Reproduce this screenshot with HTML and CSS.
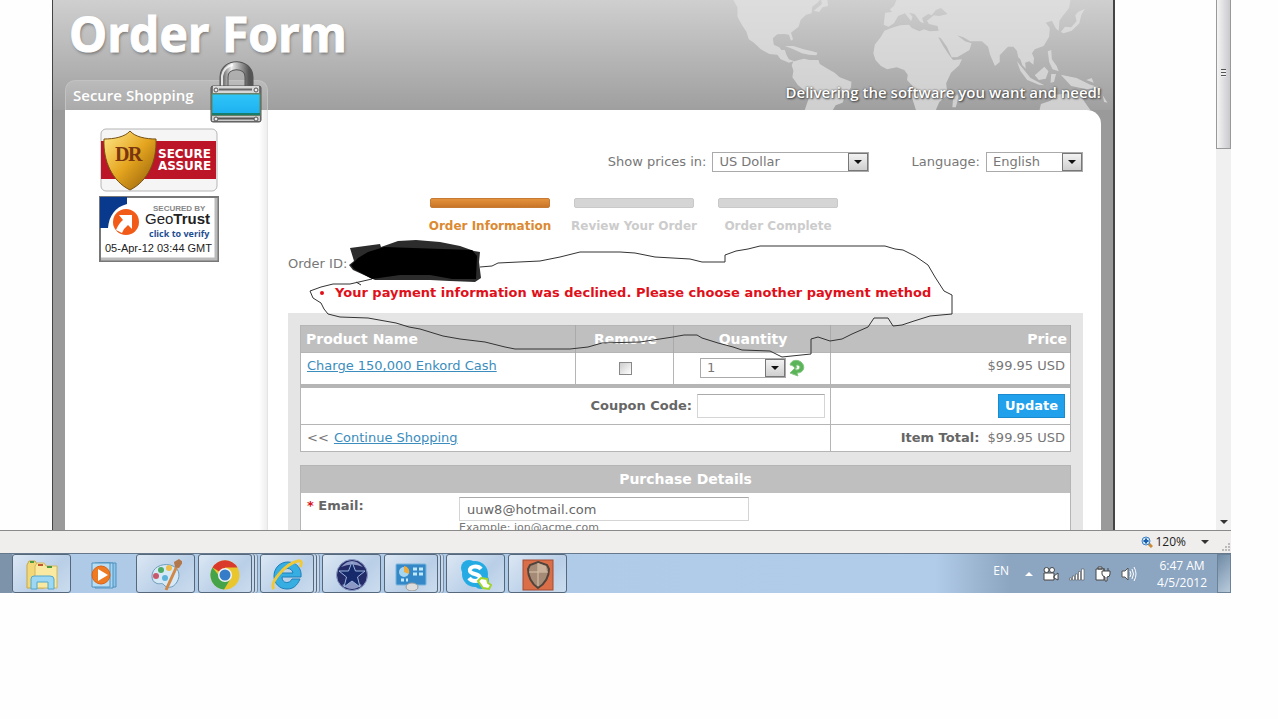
FILE: index.html
```html
<!DOCTYPE html>
<html lang="en">
<head>
    <meta charset="UTF-8">
    <meta name="viewport" content="width=device-width, initial-scale=1.0">
    <title>Order Form</title>
    <link rel="stylesheet" href="styles.css">
</head>
<body>

    <div class="browser">
        <div class="view">
            <div class="page">
                <header class="header">
                    <svg class="map" viewBox="0 0 1206 330" preserveAspectRatio="none" aria-hidden="true">
                        <path d="M100 0L112 22L112 50L125 75L138 95L145 118L160 128L180 148L205 162L228 164L238 178L262 188L275 184L270 196L275 212L272 232L288 255L312 275L318 300L308 330L390 330L398 316L418 308L428 285L443 262L444 245L410 232L395 218L372 205L352 192L348 180L322 180L306 176L290 180L278 184L262 178L255 165L250 150L240 150L234 142L218 134L215 115L228 103L248 102L262 104L268 122L274 118L268 98L290 80L296 60L312 44L328 40L330 20L345 8L352 0Z"/>
                        <path d="M250 138L275 138L305 148L330 154L345 158L342 166L320 164L300 160L275 148ZM334 32L358 12L356 0L374 0L376 18L360 22L350 36Z"/>
                        <path d="M575 0L568 18L556 28L562 36L542 38L538 74L552 80L568 70L580 48L600 40L618 64L622 50L612 38L628 42L645 66L655 70L650 54L668 42L678 46L690 30L705 24L724 42L700 48L684 46L664 62L670 72L695 78L698 92L672 94L655 88L642 94L620 84L612 74L586 76L560 84L540 92L530 110L512 134L508 160L514 180L530 198L548 208L576 202L598 210L608 224L606 240L622 258L618 285L632 330L690 330L700 306L724 286L720 250L734 218L758 196L766 178L740 180L728 164L710 136L697 112L704 114L722 140L736 172L752 172L788 150L794 130L775 124L752 106L770 112L790 124L824 124L842 140L848 164L862 198L876 186L876 166L900 140L916 140L926 152L930 172L936 178L942 196L952 206L950 188L962 184L974 194L976 174L970 160L978 148L1004 138L1020 110L1022 84L1010 68L1028 62L1040 86L1048 92L1050 62L1058 50L1078 24L1082 0Z"/>
                        <path d="M1054 96L1066 80L1084 82L1100 64L1096 46L1104 36L1124 26L1114 44L1108 70L1086 92L1062 100ZM1016 154L1026 150L1028 178L1042 198L1048 214L1030 208L1020 186ZM926 184L944 206L966 234L1006 256L990 254L956 240L936 212ZM978 226L1006 200L1018 214L1010 236L990 240ZM1026 222L1040 222L1034 246L1024 248ZM1054 224L1100 234L1140 254L1166 262L1130 268L1084 258ZM992 330L996 312L1024 302L1040 284L1074 280L1092 290L1108 280L1122 304L1140 330ZM738 322L740 298L752 282L756 292L748 322ZM1144 234L1128 240L1150 248ZM1176 286L1190 308L1180 306Z"/>
                    </svg>
                    <h1 class="title">Order Form</h1>
                    <div class="header-foot">
                        <h2 class="secure-tab">Secure Shopping</h2>
                        <p class="tagline">Delivering the software you want and need!</p>
                    </div>
                    <svg class="padlock" viewBox="0 0 54 66" aria-hidden="true">
                        <defs>
                            <linearGradient id="steel" x1="0" y1="0" x2="1" y2="0">
                                <stop offset="0" stop-color="#777"/>
                                <stop offset=".3" stop-color="#eee"/>
                                <stop offset=".6" stop-color="#aaa"/>
                                <stop offset="1" stop-color="#555"/>
                            </linearGradient>
                            <linearGradient id="lockblue" x1="0" y1="0" x2="0" y2="1">
                                <stop offset="0" stop-color="#2fc5f7"/>
                                <stop offset="1" stop-color="#1cb0f0"/>
                            </linearGradient>
                        </defs>
                        <path d="M15 30V17C15 2 40 2 40 17V30" fill="none" stroke="#555" stroke-width="9"/>
                        <path d="M15 30V17C15 2 40 2 40 17V30" fill="none" stroke="url(#steel)" stroke-width="7"/>
                        <path d="M13 26V16C14 10 18 6 24 5" fill="none" stroke="#fff" stroke-width="2" opacity=".8"/>
                        <rect x="2" y="26" width="50" height="36" rx="2" fill="#777" stroke="#555"/>
                        <rect x="4" y="26" width="46" height="7" fill="#d8d8d8"/>
                        <path d="M10 29.5H43" stroke="#666" stroke-width="2"/>
                        <rect x="3" y="34" width="48" height="21" fill="url(#lockblue)" stroke="#5c8a5c"/>
                        <path d="M3 54H51" stroke="#177d6c" stroke-width="2"/>
                        <rect x="3" y="56" width="48" height="5" fill="#ccc"/>
                        <path d="M8 58.5H46" stroke="#555" stroke-width="2"/>
                        <circle cx="7" cy="30" r="2" fill="#eee" stroke="#555"/>
                        <circle cx="47" cy="30" r="2" fill="#eee" stroke="#555"/>
                        <circle cx="7" cy="59" r="2" fill="#eee" stroke="#555"/>
                        <circle cx="47" cy="59" r="2" fill="#eee" stroke="#555"/>
                    </svg>
                </header>

                <div class="columns">
                    <aside class="sidebar">
                        <a class="badge-dr" href="#" aria-label="DR Secure Assure">
                            <svg viewBox="0 0 118 64">
                                <defs>
                                    <linearGradient id="gold" x1="0" y1="0" x2="1" y2="1">
                                        <stop offset="0" stop-color="#ffe98a"/>
                                        <stop offset=".5" stop-color="#e5a51f"/>
                                        <stop offset="1" stop-color="#8d5a08"/>
                                    </linearGradient>
                                </defs>
                                <rect x="1" y="1" width="116" height="62" rx="5" fill="#f5f5f5" stroke="#b5b5b5"/>
                                <rect x="1" y="13" width="115" height="38" fill="#bd1528"/>
                                <path d="M30 3C25 9 14 11 4 11C3 33 12 53 30 62C48 53 57 33 56 11C46 11 35 9 30 3Z" fill="url(#gold)" stroke="#755013"/>
                                <text x="15" y="33" class="dr-mark">D</text>
                                <text x="28" y="33" class="dr-mark">R</text>
                                <text x="58" y="30" class="dr-text">SECURE</text>
                                <text x="58" y="42" class="dr-text">ASSURE</text>
                            </svg>
                        </a>
                        <a class="badge-geo" href="#" aria-label="Secured by GeoTrust">
                            <svg viewBox="0 0 120 66">
                                <rect x="1" y="1" width="118" height="64" fill="#fff" stroke="#777" stroke-width="2"/>
                                <path d="M2 63H117V2" fill="none" stroke="#bbb" stroke-width="3"/>
                                <path d="M1 1H28V8C16 11 10 20 9 32H1Z" fill="#09398c"/>
                                <circle cx="27" cy="26" r="13" fill="#f15a17"/>
                                <path d="M20 19H33V33L29 29Q25 32 23 37L17 34Q20 27 24 24Z" fill="#fff"/>
                                <text x="54" y="15" class="geo-small">SECURED BY</text>
                                <text x="46" y="28" class="geo-name">Geo<tspan class="geo-bold">Trust</tspan></text>
                                <text x="50" y="41" class="geo-link">click to verify</text>
                                <text x="6" y="56" class="geo-date">05-Apr-12 03:44 GMT</text>
                            </svg>
                        </a>
                    </aside>

                    <main class="main">
                        <form class="locale">
                            <label for="currency">Show prices in:</label>
                            <span class="select select-currency">
                                <select id="currency"><option>US Dollar</option></select>
                            </span>
                            <label class="label-language" for="language">Language:</label>
                            <span class="select select-language">
                                <select id="language"><option>English</option></select>
                            </span>
                        </form>

                        <ol class="steps">
                            <li class="step active">Order Information</li>
                            <li class="step">Review Your Order</li>
                            <li class="step">Order Complete</li>
                        </ol>

                        <p class="order-id">Order ID:</p>
                        <ul class="errors">
                            <li>Your payment information was declined. Please choose another payment method</li>
                        </ul>

                        <form class="panel">
                            <table class="cart">
                                <colgroup>
                                    <col class="col-name">
                                    <col class="col-remove">
                                    <col class="col-quantity">
                                    <col>
                                </colgroup>
                                <thead>
                                    <tr>
                                        <th class="left">Product Name</th>
                                        <th id="remove-head">Remove</th>
                                        <th id="quantity-head">Quantity</th>
                                        <th class="right">Price</th>
                                    </tr>
                                </thead>
                                <tbody>
                                    <tr class="item">
                                        <td class="name"><a href="#">Charge 150,000 Enkord Cash</a></td>
                                        <td class="center"><input class="remove" type="checkbox" aria-labelledby="remove-head"></td>
                                        <td>
                                            <div class="quantity">
                                                <span class="select select-quantity">
                                                    <select aria-labelledby="quantity-head"><option>1</option></select>
                                                </span>
                                                <button class="refresh" type="button" aria-label="Refresh">
                                                    <svg viewBox="0 0 16 18">
                                                        <path d="M1 6C2 1 8 0 12 3C17 7 15 14 8 14L9 17L1 14L6 9L7 11C12 11 12 6 8 6C7 6 7 8 8 9L6 9C4 7 3 6 1 6Z" fill="#5cb45a" stroke="#83c77f"/>
                                                    </svg>
                                                </button>
                                            </div>
                                        </td>
                                        <td class="right price">$99.95 USD</td>
                                    </tr>
                                    <tr class="coupon">
                                        <td colspan="3">
                                            <div class="coupon-field">
                                                <label for="coupon">Coupon Code:</label>
                                                <input class="text coupon-input" type="text" id="coupon">
                                            </div>
                                        </td>
                                        <td class="right"><button class="update" type="button">Update</button></td>
                                    </tr>
                                    <tr class="total">
                                        <td colspan="3">&lt;&lt; <a href="#">Continue Shopping</a></td>
                                        <td class="right"><b>Item Total:</b>&nbsp; $99.95 USD</td>
                                    </tr>
                                </tbody>
                            </table>

                            <section class="details">
                                <h3>Purchase Details</h3>
                                <div class="field">
                                    <label for="email"><span class="required">*</span> Email:</label>
                                    <div class="field-value">
                                        <input class="text email-input" type="text" id="email" value="uuw8@hotmail.com">
                                        <p class="hint">Example: jon@acme.com</p>
                                    </div>
                                </div>
                            </section>
                        </form>
                    </main>
                </div>
            </div>
        </div>

        <div class="scrollbar" aria-hidden="true">
            <div class="thumb"><i></i></div>
            <div class="arrow-down"></div>
        </div>
    </div>

    <div class="status">
        <svg class="zoom-icon" viewBox="0 0 12 12" aria-hidden="true">
            <path d="M7 7L11 11" stroke="#c98b3c" stroke-width="3"/>
            <circle cx="5" cy="5" r="4" fill="#cfe6fb" stroke="#3f82c4"/>
            <path d="M5 2.5V7.5M2.5 5H7.5" stroke="#1b5fae" stroke-width="2"/>
        </svg>
        <span>120%</span>
        <i class="caret"></i>
        <svg class="resize" viewBox="0 0 8 8" aria-hidden="true">
            <path d="M6 0H8V2H6ZM3 3H5V5H3ZM6 3H8V5H6ZM0 6H2V8H0ZM3 6H5V8H3ZM6 6H8V8H6Z" fill="#bbb"/>
        </svg>
    </div>

    <nav class="taskbar">
        <button class="task" aria-label="Explorer">
            <svg viewBox="0 0 32 32">
                <path d="M1 6L3 2H9L11 5H18V29H1Z" fill="#f3d877" stroke="#c6a64a"/>
                <path d="M9 7L11 4H18L20 7H31V29H9Z" fill="#fae9a1" stroke="#d3b65b"/>
                <path d="M4 3H8M21 8H26" stroke="#4c9a3f" stroke-width="2"/>
                <path d="M12 6H17" stroke="#c2562f" stroke-width="2"/>
                <path d="M5 30V20Q5 17 8 17H24Q28 17 28 20V30H22V23H11V30Z" fill="#9cd8f3" stroke="#52a6cf"/>
            </svg>
        </button>
        <button class="task plain" aria-label="Media Player">
            <svg viewBox="0 0 32 32">
                <path d="M10 4H28V28H10Z" fill="#8ec5e8" stroke="#4f91bf"/>
                <path d="M7 4H25V29H7Z" fill="#a8d4ee" stroke="#4f91bf"/>
                <path d="M4 4H22V28H4Z" fill="#b9def3" stroke="#4f91bf"/>
                <circle cx="13" cy="16" r="9" fill="#ee7a22" stroke="#d9611a"/>
                <path d="M10 10V22L20 16Z" fill="#fff"/>
            </svg>
        </button>
        <button class="task" aria-label="Paint">
            <svg viewBox="0 0 32 32">
                <path d="M2 17C2 9 11 4 20 6C29 8 31 16 27 23C23 30 16 29 14 26C12 23 9 26 6 24C3 23 2 20 2 17Z" fill="#d5e9f6" stroke="#6f9cba"/>
                <circle cx="6" cy="17" r="3" fill="#c9586a"/>
                <circle cx="11" cy="11" r="3" fill="#4cac65"/>
                <circle cx="19" cy="9" r="3" fill="#f0bd49"/>
                <circle cx="15" cy="19" r="3" fill="#5eb3dd"/>
                <path d="M16 31L27 7" stroke="#d18745" stroke-width="3"/>
                <path d="M25 8L24 3L29 0L33 3L29 9Z" fill="#b2774a"/>
            </svg>
        </button>
        <button class="task stacked" aria-label="Chrome">
            <svg viewBox="0 0 32 32">
                <circle cx="16" cy="16" r="14.5" fill="#e9c62d"/>
                <path d="M16 16L3.500 8.500A14.500 14.500 0 0 1 28.500 8.500H16Z" fill="#d93a2b"/>
                <path d="M3.500 8.500A14.500 14.500 0 0 0 15 30.500L22 19L16 16H9.5Z" fill="#45a44a"/>
                <circle cx="16" cy="16" r="7" fill="#f4f4f4"/>
                <circle cx="16" cy="16" r="5.5" fill="#357dc8"/>
            </svg>
        </button>
        <button class="task stacked" aria-label="Internet Explorer">
            <svg viewBox="0 0 32 32">
                <path d="M29 20C26 27 22 30 16 30C8 30 3 24 3 17C3 9 9 3 17 3C26 3 31 10 30 18H11C11 25 19 25 21 20ZM11 14H22C21 8 12 8 11 14Z" fill="#37aee2" stroke="#1c7fb8"/>
                <path d="M3 30C-2 24 14 5 27 2C31 1 31 5 29 8" fill="none" stroke="#f0c93b" stroke-width="3"/>
            </svg>
        </button>
        <button class="task" aria-label="Star">
            <svg viewBox="0 0 32 32">
                <circle cx="16" cy="16" r="15.5" fill="#232c69" stroke="#8f9cc4"/>
                <path d="M5 8Q16 -4 27 8Q16 3 5 8ZM6 26Q16 34 26 26L16 22Z" fill="#8e98c4"/>
                <path d="M16 3L19.500 12H29L21.500 18L24 28L16 22L8 28L10.500 18L3 12H12.500Z" fill="#16296b" stroke="#98b5dd"/>
            </svg>
        </button>
        <button class="task stacked" aria-label="Control Panel">
            <svg viewBox="0 0 32 32">
                <rect x="1" y="5" width="30" height="21" rx="1" fill="#3588c7" stroke="#7bb4dc"/>
                <circle cx="9" cy="13" r="5" fill="#a6d5f0"/>
                <path d="M9 13V7A6 6 0 0 1 14 15Z" fill="#efab3c"/>
                <path d="M18 10H22M24 10H28M18 15H22M24 15H28M6 21H9M11 21H13" stroke="#c2e9fa" stroke-width="3"/>
                <ellipse cx="17" cy="28" rx="6" ry="4" fill="#ddd" stroke="#999"/>
            </svg>
        </button>
        <button class="task" aria-label="Skype">
            <svg viewBox="0 0 32 32">
                <circle cx="9" cy="9" r="8" fill="#25abe4"/>
                <circle cx="21" cy="22" r="8" fill="#25abe4"/>
                <circle cx="15" cy="15" r="13" fill="#25abe4"/>
                <path d="M21 10C18 6 9 7 10 12C11 16 20 14 20 19C19 23 12 23 9 19" fill="none" stroke="#fff" stroke-width="4"/>
                <path d="M18 22L21 19L27 20L28 24L31 26L29 30L23 29Z" fill="#fff" stroke="#a2d42c" stroke-width="2"/>
            </svg>
        </button>
        <button class="task" aria-label="Shield">
            <svg viewBox="0 0 32 32">
                <rect x="1" y="1" width="30" height="30" fill="#d96e48" stroke="#a54b30"/>
                <path d="M16 3L25 6L27 10Q27 22 16 29Q6 22 6 10L8 6Z" fill="#a58b76" stroke="#51443c" stroke-width="2"/>
                <path d="M16 4V27M7 13H26" stroke="#d7c4b0"/>
                <path d="M16 4L24 7L25 13H16Z" fill="#c9b19b"/>
            </svg>
        </button>

        <div class="tray">
            <span class="lang">EN</span>
            <svg class="tray-up" viewBox="0 0 8 5" aria-hidden="true"><path d="M0 5L4 1L8 5Z" fill="#fff"/></svg>
            <svg class="tray-icon" viewBox="0 0 16 16" aria-hidden="true">
                <path d="M1 7H11V14H1ZM11 10L15 7V14L11 12Z" fill="#fff" stroke="#444"/>
                <circle cx="3.500" cy="4" r="2.500" fill="#fff" stroke="#444"/>
                <circle cx="9" cy="4" r="2.500" fill="#fff" stroke="#444"/>
            </svg>
            <svg class="tray-icon" viewBox="0 0 16 16" aria-hidden="true">
                <path d="M0.500 12H2.500V14H0.500ZM3.500 10H5.500V14H3.500ZM6.500 8H8.500V14H6.500ZM9.500 5.500H11.500V14H9.500ZM12.500 3H15V14H12.500Z" fill="#fff" stroke="#555" stroke-width=".6"/>
            </svg>
            <svg class="tray-icon" viewBox="0 0 16 16" aria-hidden="true">
                <path d="M1 3H9V14H1ZM3 1H7V3H3Z" fill="#fff" stroke="#444"/>
                <path d="M7 5H15V8Q15 11 12 11V15H10V11Q7 10 7 8ZM9 2V5M13 2V5" fill="#fff" stroke="#444"/>
            </svg>
            <svg class="tray-icon" viewBox="0 0 16 16" aria-hidden="true">
                <path d="M1 5H4L7 2V14L4 11H1Z" fill="#fff" stroke="#555"/>
                <path d="M9 5Q11 8 9 11M11 3Q14 8 11 13M13 1Q17 8 13 15" fill="none" stroke="#fff"/>
            </svg>
            <div class="clock">
                <span>6:47 AM</span>
                <span>4/5/2012</span>
            </div>
            <button class="show-desktop" aria-label="Show desktop"></button>
        </div>
    </nav>

    <!-- pen marks over the page -->
    <svg class="marks" viewBox="0 0 1278 719" aria-hidden="true">
        <path d="M350 248L380 244L381 247L398 241L416 240L440 242L460 246L474 251L480 252L479 262L481 278L475 282L450 281L430 280H375L353 270L349 265L354 261Z" fill="#2c2c2c"/>
        <path d="M351 265L358 258L368 252L384 247L472 250L477 256L476 279L452 279L430 275L400 275L372 279L354 269Z" fill="#000"/>
        <path d="M480 267L492 266L498 263L540 261L560 257L580 252H620L635 253L655 257L690 259L702 262H725V255L736 251L748 249L760 246H885L895 249L903 250L915 256L928 265L935 277L944 291L952 295V314L930 316L914 321L902 325L893 326L888 318H874L868 327L852 334L842 339L830 341L818 337L811 339V354L782 357L770 351L742 350L733 347L718 343L702 338L697 335H684L673 337L640 342L602 343L588 347L570 349H515L505 347L485 342L460 339L443 336L420 329L409 327L396 323L368 318L340 317L328 314L324 309L321 303L313 298L310 291L321 287L333 284L350 284L372 279M356 282L361 285" fill="none" stroke="#333"/>
    </svg>

</body>
</html>
```

FILE: styles.css
```css
* {
    box-sizing: border-box;
}

body {
    display: flex;
    flex-direction: column;
    height: 100vh;
    margin: 0;
    padding: 0 47px 126px 0;
    background: #fefefe;
    color: #777;
    font-family: Verdana, "DejaVu Sans", sans-serif;
    font-size: 13px;
    line-height: 18px;
    overflow: hidden;
}

h1, h2, h3, p, ul, ol {
    margin: 0;
    padding: 0;
}

button, input, select {
    font: inherit;
    color: inherit;
}

a {
    color: #3b8dbd;
}

.browser {
    display: flex;
    flex: 1;
    min-height: 0;
}

.view {
    flex: 1;
    padding: 0 101px 0 52px;
    overflow: hidden;
}

.page {
    border: solid #444;
    border-width: 0 2px 0 1px;
    background: #9a9a9a;
}

/* header */
.header {
    position: relative;
    display: flex;
    flex-direction: column;
    justify-content: space-between;
    height: 110px;
    padding-left: 12px;
    background: linear-gradient(#cfcfcf, #9f9f9f);
}

.map {
    position: absolute;
    top: 0;
    right: 0;
    width: 414px;
    height: 110px;
    fill: #e4e4e4;
    opacity: .7;
}

.title {
    padding: 0 4px;
    color: #fff;
    font-family: "Open Sans", "Noto Sans", sans-serif;
    font-size: 48px;
    font-weight: bold;
    line-height: 68px;
    text-shadow: 1px 2px 3px #777;
    -webkit-text-stroke: 1px #fff;
}

.header-foot {
    display: flex;
    justify-content: space-between;
    position: relative;
}

.secure-tab {
    width: 203px;
    height: 30px;
    padding-left: 7px;
    border: 1px solid #c2c2c2;
    border-bottom: 0;
    border-radius: 10px 10px 0 0;
    background: linear-gradient(#bbb, #aaa);
    color: #fff;
    font-family: "Open Sans", "Noto Sans", sans-serif;
    font-size: 15px;
    font-weight: 600;
    line-height: 28px;
}

.tagline {
    padding-right: 12px;
    color: #fff;
    font-family: "Open Sans", "Noto Sans", sans-serif;
    font-size: 15px;
    font-weight: 600;
    line-height: 24px;
    text-shadow: 0 0 2px #444, 1px 1px 2px #444;
}

.padlock {
    position: absolute;
    top: 60px;
    left: 156px;
    width: 54px;
    height: 66px;
}

/* columns */
.columns {
    display: flex;
    padding: 0 12px;
}

.sidebar {
    display: flex;
    flex-direction: column;
    align-items: center;
    gap: 4px;
    width: 203px;
    padding: 18px 14px 0 0;
    border-right: 1px solid #e4e4e4;
    background: linear-gradient(to left, #eee, #fff 8px);
}

.sidebar svg {
    display: block;
}

.badge-dr {
    width: 118px;
}

.badge-geo {
    width: 120px;
}

.dr-mark {
    fill: #7a3610;
    font: bold 20px "Liberation Serif", serif;
}

.dr-text {
    fill: #fff;
    font: bold 12px "DejaVu Sans", sans-serif;
}

.geo-small {
    fill: #888;
    font: bold 8px "Liberation Sans", sans-serif;
}

.geo-name {
    fill: #222;
    font: 15px "Liberation Sans", sans-serif;
}

.geo-bold {
    font-weight: bold;
}

.geo-link {
    fill: #1f4f92;
    font: bold 9px "Open Sans", sans-serif;
}

.geo-date {
    fill: #222;
    font: 11px "Liberation Sans", sans-serif;
}

.main {
    flex: 1;
    padding: 42px 18px 0 20px;
    border-radius: 0 14px 0 0;
    background: #fff;
}

.locale {
    display: flex;
    align-items: center;
    justify-content: flex-end;
    gap: 6px;
}

.label-language {
    margin-left: 36px;
}

.select {
    position: relative;
    display: block;
    height: 20px;
}

.select select {
    display: block;
    width: 100%;
    height: 100%;
    padding: 0 6px;
    border: 1px solid #aaa;
    border-radius: 0;
    background: #fff;
    appearance: none;
}

.select::before {
    content: "";
    position: absolute;
    top: 1px;
    right: 1px;
    width: 18px;
    height: 16px;
    border: 1px solid #777;
    background: linear-gradient(#f2f2f2, #cfcfcf);
    pointer-events: none;
}

.select::after {
    content: "";
    position: absolute;
    top: 8px;
    right: 7px;
    border: 4px solid transparent;
    border-top-color: #111;
    border-bottom: 0;
    pointer-events: none;
}

.select-currency {
    width: 157px;
}

.select-language {
    width: 97px;
}

.select-quantity {
    width: 86px;
}

.steps {
    display: flex;
    gap: 4px;
    margin: 26px 0 0 132px;
    list-style: none;
}

.step {
    width: 140px;
    color: #ccc;
    font-size: 12px;
    font-weight: bold;
    text-align: center;
    white-space: nowrap;
}

.step::before {
    content: "";
    display: block;
    height: 8px;
    margin: 0 10px 9px;
    border: 1px solid #c9c9c9;
    border-radius: 2px;
    background: #d5d5d5;
}

.step.active {
    color: #dc8a32;
}

.step.active::before {
    border-color: #c67a33;
    background: linear-gradient(#e5923d, #c97528);
}

.order-id {
    margin-top: 20px;
}

.errors {
    margin: 11px 0;
    padding-left: 47px;
    color: #e0101a;
    font-weight: bold;
}

/* cart */
.panel {
    padding: 12px;
    background: #e5e5e5;
}

.cart {
    width: 100%;
    border: 1px solid #b5b5b5;
    border-collapse: collapse;
    background: #fff;
    table-layout: fixed;
}

.col-name {
    width: 275px;
}

.col-remove {
    width: 98px;
}

.col-quantity {
    width: 157px;
}

.cart th {
    height: 27px;
    padding: 0 3px 0 5px;
    border-right: 1px solid #aaa;
    background: #bfbfbf;
    color: #fff;
    font-size: 14px;
}

.cart td {
    padding: 0 5px 0 6px;
    border: 1px solid #b5b5b5;
}

.cart .left {
    text-align: left;
}

.cart .right {
    text-align: right;
}

.cart .center {
    text-align: center;
}

.item td {
    height: 33px;
    border-bottom: 4px solid #b5b5b5;
}

.item .name,
.item .price {
    padding-bottom: 4px;
}

.remove {
    width: 13px;
    height: 13px;
    margin: 0;
    border: 1px solid #888;
    background: linear-gradient(135deg, #ccc, #fff);
    appearance: none;
    vertical-align: middle;
}

.quantity {
    display: flex;
    align-items: center;
    justify-content: center;
    gap: 3px;
}

.refresh {
    width: 16px;
    height: 18px;
    padding: 0;
    border: 0;
    background: none;
}

.refresh svg {
    display: block;
}

.coupon td {
    height: 39px;
}

.coupon-field {
    display: flex;
    align-items: center;
    justify-content: flex-end;
    gap: 5px;
    color: #666;
    font-weight: bold;
}

.text {
    height: 24px;
    padding: 0 7px;
    border: 1px solid #d5d5d5;
    border-top-color: #aaa;
    background: #fff;
}

.coupon-input {
    width: 128px;
}

.update {
    height: 24px;
    padding: 0 6px;
    border: 1px solid #1b8bd0;
    background: #21a0ec;
    color: #fff;
    font-weight: bold;
}

.total td {
    height: 27px;
}

.total a {
    margin-left: 1px;
}

.total b {
    color: #666;
}

.details {
    margin-top: 13px;
    border: 1px solid #b5b5b5;
    background: #fff;
}

.details h3 {
    background: #bfbfbf;
    color: #fff;
    font-size: 14px;
    line-height: 27px;
    text-align: center;
}

.field {
    display: flex;
    padding: 4px 6px 20px;
}

.field label {
    width: 152px;
    color: #666;
    font-weight: bold;
}

.required {
    color: #d8121b;
}

.email-input {
    display: block;
    width: 290px;
    color: #666;
}

.hint {
    font-size: 11px;
    line-height: 14px;
}

/* scrollbar and status bar */
.scrollbar {
    display: flex;
    flex-direction: column;
    justify-content: space-between;
    align-items: center;
    width: 15px;
    padding-bottom: 6px;
    background: #f0f0f0;
}

.thumb {
    width: 15px;
    height: 149px;
    padding: 69px 4px 0;
    border: 1px solid #999;
    border-top: 0;
    background: linear-gradient(to right, #f5f5f5, #c9c9cf);
}

.thumb i {
    display: block;
    height: 8px;
    background: repeating-linear-gradient(#555 0 1px, #eee 1px 3px);
}

.arrow-down,
.caret {
    border: 4px solid transparent;
    border-top-color: #333;
    border-bottom: 0;
}

.status {
    display: flex;
    align-items: center;
    justify-content: flex-end;
    height: 23px;
    border-top: 1px solid #8a8a8a;
    background: #f0eeed;
    color: #222;
    font-family: "Open Sans", "Noto Sans", sans-serif;
    font-size: 12px;
}

.zoom-icon {
    width: 12px;
    height: 12px;
    margin-right: 2px;
}

.caret {
    margin: 0 13px 0 15px;
}

.resize {
    align-self: flex-end;
    width: 8px;
    height: 8px;
    margin: 0 1px 2px 0;
}

/* taskbar */
.taskbar {
    display: flex;
    gap: 3px;
    height: 40px;
    padding-left: 12px;
    border-top: 1px solid #66788b;
    background: linear-gradient(to right, #7d93a9 12px, #afcae6 13px, #b1cce8 76%, #8ca5c1 82%);
}

.task {
    width: 59px;
    padding: 2px 0 0;
    border: 1px solid #56687b;
    border-radius: 3px;
    background: linear-gradient(135deg, #dbe7f4, #b9cfe7 60%, #cbdcee);
}

.task svg {
    display: block;
    width: 32px;
    height: 32px;
    margin: 0 auto;
}

.task.plain {
    border-color: transparent;
    background: none;
}

.task.stacked {
    width: 54px;
    margin-right: 5px;
    box-shadow: 2px 0 0 #c5d8ec, 3px 0 0 #56687b, 5px 0 0 #c5d8ec, 6px 0 0 #7b8fa4;
}

.tray {
    display: flex;
    align-items: center;
    gap: 10px;
    margin-left: auto;
    color: #fff;
    font-family: "Open Sans", "Noto Sans", sans-serif;
    font-size: 12px;
}

.tray-icon {
    width: 16px;
    height: 16px;
}

.lang {
    margin-right: 6px;
    padding-bottom: 5px;
}

.tray-up {
    width: 8px;
    height: 5px;
}

.clock {
    display: flex;
    flex-direction: column;
    margin-left: 10px;
    text-align: center;
    line-height: 17px;
}

.show-desktop {
    align-self: stretch;
    width: 14px;
    padding: 0;
    border: 1px solid #6c8299;
    background: linear-gradient(135deg, #6f8ba5, #b9cbdc);
}

.marks {
    position: absolute;
    top: 0;
    left: 0;
    width: 1278px;
    height: 719px;
    pointer-events: none;
}
```
